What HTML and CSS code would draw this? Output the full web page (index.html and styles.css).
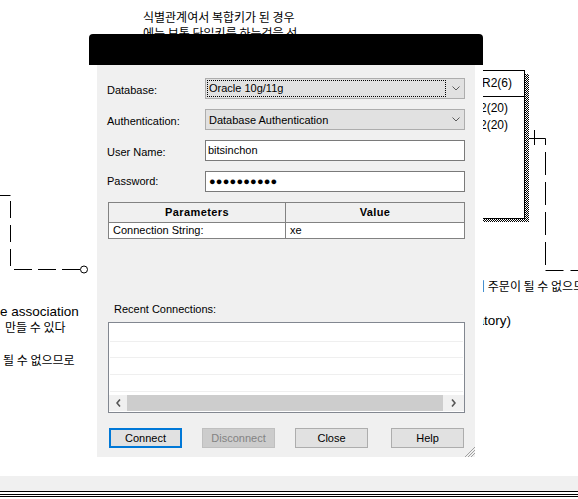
FILE: index.html
```html
<!DOCTYPE html>
<html>
<head>
<meta charset="utf-8">
<link rel="stylesheet" href="styles.css">
</head>
<body>
<div class="screen">
  <svg class="diagram" width="578" height="499" viewBox="0 0 578 499">
    <g fill="none" stroke="#000" stroke-width="1">
      <path d="M0 195.5 H10.5"/>
      <path d="M10.5 201 V268" stroke-dasharray="17 7"/>
      <path d="M14 269.5 H80" stroke-dasharray="18 6"/>
      <circle cx="84" cy="269.5" r="3.5" fill="#fff"/>
      <path d="M534.5 130 V145"/>
      <path d="M529 138.5 H545.5 V265" stroke-dasharray="23 7"/>
      <path d="M545.5 270.5 H578" stroke-dasharray="18 7"/>
    </g>
  </svg>

  <p class="note note-top">식별관계여서 복합키가 된 경우<br>에는 보통 단일키를 하는것을 선</p>
  <p class="latin note-assoc">e association</p>
  <p class="note note-make">만들 수 있다</p>
  <p class="note note-cannot">될 수 없으므로</p>
  <p class="note note-order">하나의 주문이 될 수 없으므</p>
  <p class="latin note-mand">(mandatory)</p>

  <div class="entity-shadow"></div>
  <div class="entity">
    <div class="entity-head">VARCHAR2(6)</div>
    <div class="entity-attrs">
      <div>VARCHAR2(20)</div>
      <div>VARCHAR2(20)</div>
    </div>
  </div>

  <div class="dialog">
    <div class="titlebar"></div>
    <div class="frame">
      <div class="panel">
        <div class="form">
          <label class="lbl">Database:</label>
          <div class="combo">
            <span class="focus">Oracle 10g/11g</span>
            <svg class="chev" width="8" height="5" viewBox="0 0 8 5"><polyline points="0.5,0.5 4,4 7.5,0.5" fill="none" stroke="#5a5a5a" stroke-width="1"/></svg>
          </div>
          <label class="lbl">Authentication:</label>
          <div class="combo">
            <span class="combo-text">Database Authentication</span>
            <svg class="chev" width="8" height="5" viewBox="0 0 8 5"><polyline points="0.5,0.5 4,4 7.5,0.5" fill="none" stroke="#5a5a5a" stroke-width="1"/></svg>
          </div>
          <label class="lbl">User Name:</label>
          <div class="field">bitsinchon</div>
          <label class="lbl lbl-pw">Password:</label>
          <div class="field field-pw">●●●●●●●●●●</div>
        </div>

        <div class="params">
          <div class="ph ph-left">Parameters</div>
          <div class="ph">Value</div>
          <div class="pd pd-left">Connection String:</div>
          <div class="pd">xe</div>
        </div>

        <div class="recent-label">Recent Connections:</div>
        <div class="recent">
          <div class="row row-1"></div>
          <div class="row row-2"></div>
          <div class="row"></div>
          <div class="row"></div>
          <div class="hscroll">
            <span class="arrow"><svg width="5" height="8" viewBox="0 0 5 8"><polyline points="4,0.5 1,4 4,7.5" fill="none" stroke="#555" stroke-width="1.6"/></svg></span>
            <span class="track"></span>
            <span class="arrow arrow-r"><svg width="5" height="8" viewBox="0 0 5 8"><polyline points="1,0.5 4,4 1,7.5" fill="none" stroke="#555" stroke-width="1.6"/></svg></span>
          </div>
        </div>

        <div class="actions">
          <button class="btn btn-default">Connect</button>
          <button class="btn" disabled>Disconnect</button>
          <button class="btn">Close</button>
          <button class="btn btn-help">Help</button>
        </div>

        <svg class="grip" width="11" height="11" viewBox="0 0 11 11">
          <g stroke="#a0a0a0" stroke-width="1">
            <line x1="11" y1="1" x2="1" y2="11"/>
            <line x1="11" y1="4" x2="4" y2="11"/>
            <line x1="11" y1="7" x2="7" y2="11"/>
          </g>
        </svg>
      </div>
    </div>
  </div>

  <div class="taskbar">
    <div class="strip"></div>
    <div class="rules"></div>
  </div>
</div>
</body>
</html>
```

FILE: styles.css
```css
* { box-sizing: border-box; }

body {
  margin: 0;
  background: #fff;
  font-family: "Liberation Sans", Arial, sans-serif;
  font-size: 11px;
  color: #000;
}

.screen {
  position: relative;
  width: 578px;
  height: 499px;
  overflow: hidden;
  display: flex;
  flex-direction: column;
}

.diagram {
  position: absolute;
  left: 0;
  top: 0;
}

/* background diagram notes */
.note {
  position: absolute;
  margin: 0;
  font-family: "Noto Sans CJK KR", sans-serif;
  font-size: 12px;
  line-height: 16px;
  white-space: nowrap;
}
.latin {
  position: absolute;
  margin: 0;
  font-family: "Liberation Sans", Arial, sans-serif;
  font-size: 13.5px;
  line-height: 15px;
  white-space: nowrap;
}
.note-top { left: 143px; top: 9px; }
.note-assoc { left: 0; top: 304px; }
.note-make { left: 5px; top: 319px; line-height: 15px; }
.note-cannot { left: 3px; top: 352px; }
.note-order { left: 452px; top: 278px; }
.note-mand { right: 67px; top: 313px; }

/* entity box */
.entity-shadow {
  position: absolute;
  left: 424px;
  top: 74px;
  width: 105px;
  height: 148px;
  background: repeating-conic-gradient(#000 0 25%, #fff 0 50%) 0 0 / 2px 2px;
}
.entity {
  position: absolute;
  left: 420px;
  top: 70px;
  width: 105px;
  height: 149px;
  border: 1px solid #000;
  background: #fff;
  font-size: 12px;
}
.entity-head {
  height: 26px;
  border-bottom: 1px solid #000;
  text-align: right;
  padding-right: 12px;
  line-height: 25px;
}
.entity-attrs {
  padding: 3px 16px 0 0;
  text-align: right;
  line-height: 17px;
}

/* dialog */
.dialog {
  position: absolute;
  left: 89px;
  top: 34px;
  width: 394px;
  display: flex;
  flex-direction: column;
}
.titlebar {
  height: 31px;
  background: #000;
  border-radius: 4px 4px 0 0;
}
.frame {
  background: #fff;
  padding: 0 8px 8px;
}
.panel {
  position: relative;
  height: 392px;
  background: #f0f0f0;
  padding: 13px 10px 0;
  display: flex;
  flex-direction: column;
}

.form {
  display: grid;
  grid-template-columns: 98px 260px;
  grid-auto-rows: 21px;
  row-gap: 10px;
}
.lbl {
  line-height: 21px;
  padding-top: 2px;
}
.lbl-pw { padding-top: 0; }

.combo {
  display: flex;
  align-items: center;
  border: 1px solid #adadad;
  background: #e1e1e1;
}
.focus {
  width: 239px;
  height: 17px;
  margin-left: 1px;
  border: 1px dotted #000;
  padding-left: 1px;
  line-height: 15px;
}
.combo-text {
  padding-left: 3px;
}
.chev {
  margin-left: auto;
  margin-right: 4px;
}
.field {
  border: 1px solid #7a7a7a;
  background: #fff;
  padding-left: 2px;
  line-height: 19px;
}
.field-pw {
  padding-left: 3px;
  letter-spacing: 0.2px;
}

.params {
  display: grid;
  grid-template-columns: 177px 1fr;
  margin: 10px 0 0 1px;
  width: 357px;
  border: 1px solid #828282;
}
.ph {
  height: 20px;
  line-height: 19px;
  border-bottom: 1px solid #828282;
  background: #f0f0f0;
  text-align: center;
  font-weight: bold;
  letter-spacing: 0.4px;
}
.ph-left, .pd-left { border-right: 1px solid #828282; }
.pd {
  height: 15px;
  line-height: 15px;
  background: #fff;
  padding-left: 4px;
}

.recent-label {
  margin-top: 63px;
  line-height: 14px;
  padding-left: 7px;
}
.recent {
  margin: 6px 0 0 1px;
  width: 357px;
  height: 91px;
  border: 1px solid #828790;
  background: #fff;
}
.row {
  height: 17px;
  margin: 0 1px;
  border-bottom: 1px solid #efefef;
}
.row-1 { height: 19px; }
.row-2 { height: 16px; }
.hscroll {
  display: flex;
  height: 16px;
  margin-top: 3px;
}
.arrow {
  width: 18px;
  background: #f0f0f0;
  display: flex;
  align-items: center;
  justify-content: center;
}
.arrow-r { width: 21px; }
.track {
  flex: 1;
  background: #cdcdcd;
}

.actions {
  display: flex;
  gap: 20px;
  margin: 15px 1px 0 2px;
}
.btn {
  width: 73px;
  height: 20px;
  padding: 0;
  border: 1px solid #adadad;
  background: #e1e1e1;
  font-family: "Liberation Sans", Arial, sans-serif;
  font-size: 11px;
  color: #000;
}
.btn-default { border: 2px solid #0078d7; }
.btn:disabled {
  background: #cccccc;
  border-color: #bfbfbf;
  color: #838383;
}
.btn-help { margin-left: auto; }

.grip {
  position: absolute;
  right: 0;
  bottom: 0;
}

/* bottom bar */
.taskbar { margin-top: auto; }
.strip {
  height: 15px;
  background: #f0f0f0;
}
.rules {
  height: 8px;
  background: linear-gradient(#000 0 1px, #fff 1px 3px, #000 3px 4px, #fff 4px 5px, #000 5px 6px, #fff 6px);
}
```
